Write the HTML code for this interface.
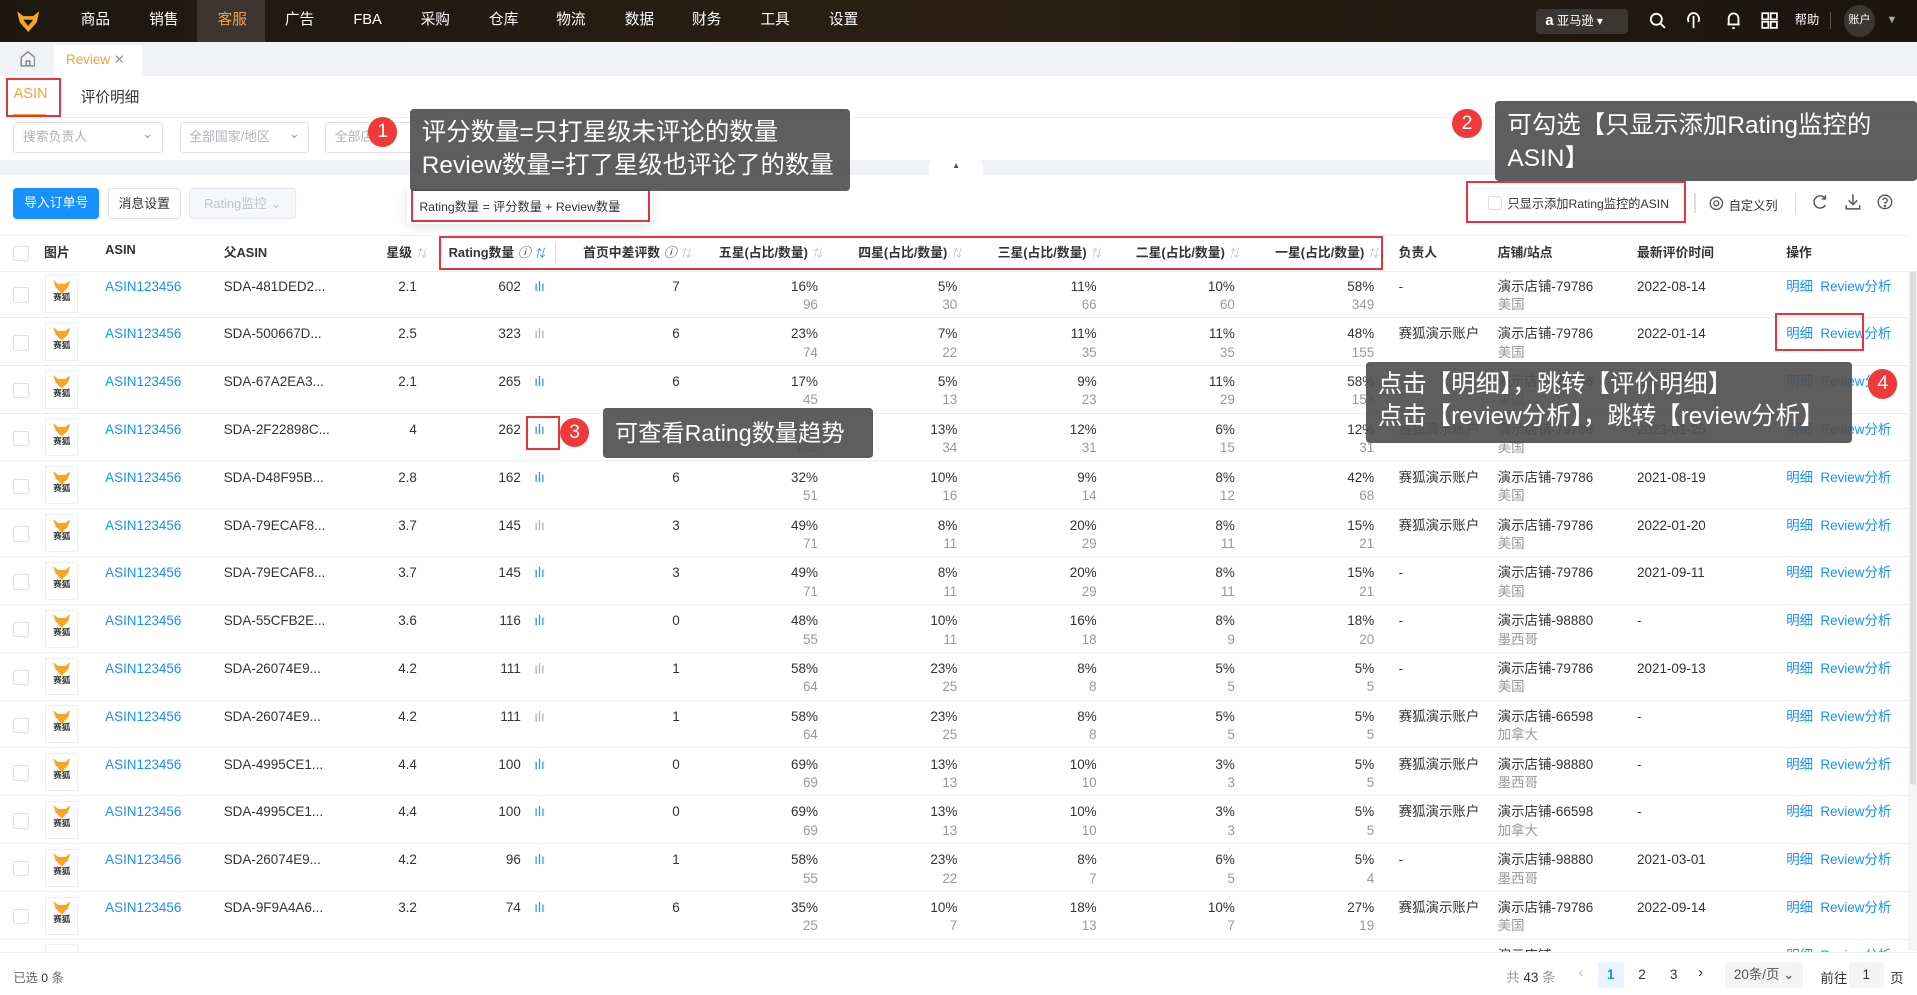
<!DOCTYPE html>
<html><head><meta charset="utf-8">
<style>
html,body{margin:0;padding:0;overflow:hidden;background:#fff}
#w{zoom:1.22258;width:1568px;height:814px;position:relative;overflow:hidden;font-family:"Liberation Sans","Noto Sans CJK SC",sans-serif;font-size:11px;color:#333}
.abs{position:absolute}
.top{left:0;top:0;width:1568px;height:34px;background:linear-gradient(90deg,#1d1712,#2a1f12 50%,#1a150f);}
.top .m{position:absolute;top:0;height:34px;line-height:34px;color:#fff;font-size:12px}
.tabbar{left:0;top:34px;width:1568px;height:28px;background:#f0f2f5}
.sel{position:absolute;top:100px;height:25px;border:1px solid #dcdfe6;border-radius:3px;box-sizing:border-box;color:#b0b3b8;font-size:10.5px;line-height:23px;padding-left:7px;background:#fff}
.sel:after{content:"⌄";position:absolute;right:7px;top:-3px;color:#999}
.btn{position:absolute;top:154px;height:25px;line-height:25px;border-radius:3px;box-sizing:border-box;text-align:center;font-size:10.5px}
.hd{left:0;top:192px;width:1562px;height:29px;border-bottom:1px solid #ebeef5;border-top:1px solid #ebeef5;font-weight:bold;font-size:10.5px}
.hd span{position:absolute;top:5px}
.sort{color:#c0c4cc;font-weight:normal;font-size:9px}
.ck{position:absolute;left:11px;width:11px;height:11px;border:1px solid #dcdfe6;border-radius:2px;background:#fff}
#rows{position:absolute;left:0;top:221px;width:1562px}
.r{position:relative;height:38.3px;border-bottom:1px solid #ebeef5}
.r .ck{top:14px}
.r i{position:absolute;top:6px;font-style:normal;line-height:14px;text-align:right;white-space:nowrap}
.r i b{display:block;color:#999;font-weight:normal;margin-top:1px}
.r .im{position:absolute;left:37px;top:4px;width:27px;height:31px;border:1px solid #eee;box-sizing:border-box;text-align:center}
.r .im svg{display:block;margin:2px auto 0}
.r .im u{text-decoration:none;font-size:7px;font-weight:bold;display:block;line-height:8px;color:#333}
.l{text-align:left!important}
.bl{color:#1890ff}
.bar{position:absolute;top:8px;left:437px}
.tip{position:absolute;background:rgba(80,80,80,.92);color:#fff;border-radius:3px;font-size:20px;line-height:27px;padding:6px 10px;box-sizing:border-box}
.num{position:absolute;width:24px;height:24px;border-radius:12px;background:#f03a3a;color:#fff;font-size:16px;line-height:24px;text-align:center}
.rb{position:absolute;border:2px solid #e8333a;box-sizing:border-box}
</style></head><body><div id="w">

<div class="abs top">
 <svg class="abs" style="left:13px;top:8px" width="20" height="19" viewBox="0 0 20 19"><path d="M1 1 L6 5 L14 5 L19 1 L17 10 L10 18 L3 10 Z" fill="#f5a623"/><path d="M6 8 L10 13 L14 8 Z" fill="#1d1712"/></svg>
 <div class="abs" style="left:161px;top:0;width:56px;height:34px;background:#3b3430"></div>
 <span class="m" style="left:66px">商品</span><span class="m" style="left:122px">销售</span><span class="m" style="left:178px;color:#f7a13a">客服</span><span class="m" style="left:233px">广告</span><span class="m" style="left:289px">FBA</span><span class="m" style="left:344px">采购</span><span class="m" style="left:400px">仓库</span><span class="m" style="left:455px">物流</span><span class="m" style="left:511px">数据</span><span class="m" style="left:566px">财务</span><span class="m" style="left:622px">工具</span><span class="m" style="left:678px">设置</span>
 <div class="abs" style="left:1256px;top:7px;width:76px;height:21px;background:#3a3632;border-radius:3px;color:#fff;font-size:10px;line-height:21px;padding-left:8px;box-sizing:border-box"><b style="font-size:12px">a</b> 亚马逊 ▾</div>
 <svg class="abs" style="left:1349px;top:10px" width="14" height="14" viewBox="0 0 14 14" fill="none" stroke="#fff" stroke-width="1.5"><circle cx="6" cy="6" r="4.5"/><path d="M9.5 9.5 L13 13"/></svg>
 <svg class="abs" style="left:1378px;top:9px" width="14" height="16" viewBox="0 0 14 16" fill="none" stroke="#fff" stroke-width="1.5"><path d="M3 9 A4.5 5 0 1 1 11 9 M7 4 v10"/></svg>
 <svg class="abs" style="left:1411px;top:9px" width="14" height="16" viewBox="0 0 14 16" fill="none" stroke="#fff" stroke-width="1.5"><path d="M3 11 V6 A4 4 0 0 1 11 6 V11 H2 H12 M6 14 h2"/></svg>
 <svg class="abs" style="left:1440px;top:10px" width="14" height="14" viewBox="0 0 14 14" fill="none" stroke="#fff" stroke-width="1.4"><rect x="1" y="1" width="5" height="5"/><rect x="8" y="1" width="5" height="5"/><rect x="1" y="8" width="5" height="5"/><rect x="8" y="8" width="5" height="5"/></svg>
 <span class="m" style="left:1468px;font-size:10px">帮助</span>
 <div class="abs" style="left:1497px;top:10px;width:1px;height:14px;background:#555"></div>
 <div class="abs" style="left:1508px;top:4px;width:26px;height:26px;border-radius:13px;background:#3a3632;color:#fff;font-size:9px;line-height:26px;text-align:center">账户</div>
 <span class="m" style="left:1543px;color:#aaa;font-size:9px">▼</span>
</div>

<div class="abs tabbar">
 <svg class="abs" style="left:16px;top:7px" width="13" height="14" viewBox="0 0 13 14" fill="none" stroke="#888" stroke-width="1.2"><path d="M1 6 L6.5 1.5 L12 6 V13 H1 Z M5 13 V9 H8 V13"/></svg>
 <div class="abs" style="left:44px;top:3px;width:72px;height:25px;background:#fff;color:#f7a13a;line-height:25px;padding-left:10px;box-sizing:border-box">Review <span style="color:#999">✕</span></div>
</div>

<div class="abs" style="left:0;top:62px;width:1568px;height:34px;border-bottom:1px solid #ebeef5"></div>
<span class="abs" style="left:11px;top:70px;font-size:12px;color:#f7a13a">ASIN</span>
<div class="abs" style="left:11px;top:93px;width:27px;height:2px;background:#f7a13a"></div>
<span class="abs" style="left:66px;top:70px;font-size:12px">评价明细</span>
<div class="rb" style="left:5px;top:64px;width:45px;height:32px"></div>

<div class="sel" style="left:11px;width:122px">搜索负责人</div>
<div class="sel" style="left:147px;width:106px">全部国家/地区</div>
<div class="sel" style="left:266px;width:120px">全部店</div>
<div class="abs" style="left:0;top:131px;width:1568px;height:12px;background:#f0f2f5"></div>
<div class="abs" style="left:760px;top:131px;width:44px;height:12px;background:#fff;border-radius:4px 4px 0 0;text-align:center;font-size:7px;color:#555">▲</div>

<div class="btn" style="left:11px;width:70px;background:#1890ff;color:#fff">导入订单号</div>
<div class="btn" style="left:88px;width:60px;border:1px solid #dcdfe6">消息设置</div>
<div class="btn" style="left:155px;width:87px;border:1px solid #e4e7ed;background:#f5f7fa;color:#c0c4cc">Rating监控 ⌄</div>

<div class="abs" style="left:1217px;top:160px;width:10px;height:10px;border:1px solid #dcdfe6;border-radius:2px"></div>
<span class="abs" style="left:1233px;top:159px;font-size:10px">只显示添加Rating监控的ASIN</span>
<div class="rb" style="left:1199px;top:148px;width:180px;height:34px"></div>
<div class="abs" style="left:1386px;top:158px;width:1px;height:16px;background:#ddd"></div>
<svg class="abs" style="left:1398px;top:160px" width="12" height="12" viewBox="0 0 12 12" fill="none" stroke="#555" stroke-width="1.1"><circle cx="6" cy="6" r="5"/><circle cx="6" cy="6" r="2"/></svg>
<span class="abs" style="left:1414px;top:160px;font-size:10px">自定义列</span>
<div class="abs" style="left:1468px;top:158px;width:1px;height:16px;background:#ddd"></div>
<svg class="abs" style="left:1482px;top:159px" width="13" height="13" viewBox="0 0 13 13" fill="none" stroke="#555" stroke-width="1.2"><path d="M11 4 A5 5 0 1 0 11 9 M11 1 V4 H8"/></svg>
<svg class="abs" style="left:1509px;top:158px" width="13" height="14" viewBox="0 0 13 14" fill="none" stroke="#555" stroke-width="1.2"><path d="M6.5 1 V9 M3 6 L6.5 9.5 L10 6 M1 10 V13 H12 V10"/></svg>
<svg class="abs" style="left:1535px;top:159px" width="13" height="13" viewBox="0 0 13 13" fill="none" stroke="#555" stroke-width="1.1"><circle cx="6.5" cy="6.5" r="5.5"/><path d="M4.8 5 A1.8 1.8 0 1 1 6.5 7 V8"/><circle cx="6.5" cy="9.8" r=".5" fill="#555"/></svg>

<div class="abs hd">
 <div class="ck" style="top:8px"></div>
 <span style="left:36px">图片</span><span style="left:86px">ASIN</span><span style="left:183px">父ASIN</span>
 <span style="left:316px">星级 <em class="sort">⇅</em></span>
 <span style="left:367px">Rating数量 <em style="font-weight:normal">ⓘ</em> <em class="sort" style="color:#1890ff">⇅</em></span>
 <div class="abs" style="left:454px;top:6px;width:1px;height:16px;background:#ddd"></div>
 <span style="left:477px">首页中差评数 <em style="font-weight:normal">ⓘ</em> <em class="sort">⇅</em></span>
 <span style="left:588px">五星(占比/数量) <em class="sort">⇅</em></span>
 <span style="left:702px">四星(占比/数量) <em class="sort">⇅</em></span>
 <span style="left:816px">三星(占比/数量) <em class="sort">⇅</em></span>
 <span style="left:929px">二星(占比/数量) <em class="sort">⇅</em></span>
 <span style="left:1043px">一星(占比/数量) <em class="sort">⇅</em></span>
 <span style="left:1144px">负责人</span><span style="left:1225px">店铺/站点</span><span style="left:1339px">最新评价时间</span><span style="left:1461px">操作</span>
</div>

<div id="rows">
<div class="r"><div class="ck"></div><div class="im"><svg width="16" height="12" viewBox="0 0 16 12"><path d="M1 1 L5 4 L11 4 L15 1 L13 7 L8 12 L3 7Z" fill="#f5a623"/></svg><u>赛狐</u></div><i class="l bl" style="left:86px">ASIN123456</i><i class="l" style="left:183px">SDA-481DED2...</i><i style="right:1221px">2.1</i><i style="right:1136px">602</i><i class="bar bl">ılı</i><i style="right:1006px">7</i><i style="right:893px">16%<b>96</b></i><i style="right:779px">5%<b>30</b></i><i style="right:665px">11%<b>66</b></i><i style="right:552px">10%<b>60</b></i><i style="right:438px">58%<b>349</b></i><i class="l" style="left:1144px">-</i><i class="l" style="left:1225px">演示店铺-79786<b class="l">美国</b></i><i class="l" style="left:1339px">2022-08-14</i><i class="l bl" style="left:1461px">明细</i><i class="l bl" style="left:1489px">Review分析</i></div>
<div class="r"><div class="ck"></div><div class="im"><svg width="16" height="12" viewBox="0 0 16 12"><path d="M1 1 L5 4 L11 4 L15 1 L13 7 L8 12 L3 7Z" fill="#f5a623"/></svg><u>赛狐</u></div><i class="l bl" style="left:86px">ASIN123456</i><i class="l" style="left:183px">SDA-500667D...</i><i style="right:1221px">2.5</i><i style="right:1136px">323</i><i class="bar" style="color:#aaa">ılı</i><i style="right:1006px">6</i><i style="right:893px">23%<b>74</b></i><i style="right:779px">7%<b>22</b></i><i style="right:665px">11%<b>35</b></i><i style="right:552px">11%<b>35</b></i><i style="right:438px">48%<b>155</b></i><i class="l" style="left:1144px">赛狐演示账户</i><i class="l" style="left:1225px">演示店铺-79786<b class="l">美国</b></i><i class="l" style="left:1339px">2022-01-14</i><i class="l bl" style="left:1461px">明细</i><i class="l bl" style="left:1489px">Review分析</i></div>
<div class="r"><div class="ck"></div><div class="im"><svg width="16" height="12" viewBox="0 0 16 12"><path d="M1 1 L5 4 L11 4 L15 1 L13 7 L8 12 L3 7Z" fill="#f5a623"/></svg><u>赛狐</u></div><i class="l bl" style="left:86px">ASIN123456</i><i class="l" style="left:183px">SDA-67A2EA3...</i><i style="right:1221px">2.1</i><i style="right:1136px">265</i><i class="bar bl">ılı</i><i style="right:1006px">6</i><i style="right:893px">17%<b>45</b></i><i style="right:779px">5%<b>13</b></i><i style="right:665px">9%<b>23</b></i><i style="right:552px">11%<b>29</b></i><i style="right:438px">58%<b>153</b></i><i class="l" style="left:1225px">演示店铺-79786<b class="l">美国</b></i><i class="l" style="left:1339px">2023-02-10</i><i class="l bl" style="left:1461px">明细</i><i class="l bl" style="left:1489px">Review分析</i></div>
<div class="r"><div class="ck"></div><div class="im"><svg width="16" height="12" viewBox="0 0 16 12"><path d="M1 1 L5 4 L11 4 L15 1 L13 7 L8 12 L3 7Z" fill="#f5a623"/></svg><u>赛狐</u></div><i class="l bl" style="left:86px">ASIN123456</i><i class="l" style="left:183px">SDA-2F22898C...</i><i style="right:1221px">4</i><i style="right:1136px">262</i><i class="bar bl">ılı</i><i style="right:1006px">2</i><i style="right:893px">56%<b>149</b></i><i style="right:779px">13%<b>34</b></i><i style="right:665px">12%<b>31</b></i><i style="right:552px">6%<b>15</b></i><i style="right:438px">12%<b>31</b></i><i class="l" style="left:1144px">赛狐演示账户</i><i class="l" style="left:1225px">演示店铺-79786<b class="l">美国</b></i><i class="l" style="left:1339px">2023-01-25</i><i class="l bl" style="left:1461px">明细</i><i class="l bl" style="left:1489px">Review分析</i></div>
<div class="r"><div class="ck"></div><div class="im"><svg width="16" height="12" viewBox="0 0 16 12"><path d="M1 1 L5 4 L11 4 L15 1 L13 7 L8 12 L3 7Z" fill="#f5a623"/></svg><u>赛狐</u></div><i class="l bl" style="left:86px">ASIN123456</i><i class="l" style="left:183px">SDA-D48F95B...</i><i style="right:1221px">2.8</i><i style="right:1136px">162</i><i class="bar bl">ılı</i><i style="right:1006px">6</i><i style="right:893px">32%<b>51</b></i><i style="right:779px">10%<b>16</b></i><i style="right:665px">9%<b>14</b></i><i style="right:552px">8%<b>12</b></i><i style="right:438px">42%<b>68</b></i><i class="l" style="left:1144px">赛狐演示账户</i><i class="l" style="left:1225px">演示店铺-79786<b class="l">美国</b></i><i class="l" style="left:1339px">2021-08-19</i><i class="l bl" style="left:1461px">明细</i><i class="l bl" style="left:1489px">Review分析</i></div>
<div class="r"><div class="ck"></div><div class="im"><svg width="16" height="12" viewBox="0 0 16 12"><path d="M1 1 L5 4 L11 4 L15 1 L13 7 L8 12 L3 7Z" fill="#f5a623"/></svg><u>赛狐</u></div><i class="l bl" style="left:86px">ASIN123456</i><i class="l" style="left:183px">SDA-79ECAF8...</i><i style="right:1221px">3.7</i><i style="right:1136px">145</i><i class="bar" style="color:#aaa">ılı</i><i style="right:1006px">3</i><i style="right:893px">49%<b>71</b></i><i style="right:779px">8%<b>11</b></i><i style="right:665px">20%<b>29</b></i><i style="right:552px">8%<b>11</b></i><i style="right:438px">15%<b>21</b></i><i class="l" style="left:1144px">赛狐演示账户</i><i class="l" style="left:1225px">演示店铺-79786<b class="l">美国</b></i><i class="l" style="left:1339px">2022-01-20</i><i class="l bl" style="left:1461px">明细</i><i class="l bl" style="left:1489px">Review分析</i></div>
<div class="r"><div class="ck"></div><div class="im"><svg width="16" height="12" viewBox="0 0 16 12"><path d="M1 1 L5 4 L11 4 L15 1 L13 7 L8 12 L3 7Z" fill="#f5a623"/></svg><u>赛狐</u></div><i class="l bl" style="left:86px">ASIN123456</i><i class="l" style="left:183px">SDA-79ECAF8...</i><i style="right:1221px">3.7</i><i style="right:1136px">145</i><i class="bar bl">ılı</i><i style="right:1006px">3</i><i style="right:893px">49%<b>71</b></i><i style="right:779px">8%<b>11</b></i><i style="right:665px">20%<b>29</b></i><i style="right:552px">8%<b>11</b></i><i style="right:438px">15%<b>21</b></i><i class="l" style="left:1144px">-</i><i class="l" style="left:1225px">演示店铺-79786<b class="l">美国</b></i><i class="l" style="left:1339px">2021-09-11</i><i class="l bl" style="left:1461px">明细</i><i class="l bl" style="left:1489px">Review分析</i></div>
<div class="r"><div class="ck"></div><div class="im"><svg width="16" height="12" viewBox="0 0 16 12"><path d="M1 1 L5 4 L11 4 L15 1 L13 7 L8 12 L3 7Z" fill="#f5a623"/></svg><u>赛狐</u></div><i class="l bl" style="left:86px">ASIN123456</i><i class="l" style="left:183px">SDA-55CFB2E...</i><i style="right:1221px">3.6</i><i style="right:1136px">116</i><i class="bar bl">ılı</i><i style="right:1006px">0</i><i style="right:893px">48%<b>55</b></i><i style="right:779px">10%<b>11</b></i><i style="right:665px">16%<b>18</b></i><i style="right:552px">8%<b>9</b></i><i style="right:438px">18%<b>20</b></i><i class="l" style="left:1144px">-</i><i class="l" style="left:1225px">演示店铺-98880<b class="l">墨西哥</b></i><i class="l" style="left:1339px">-</i><i class="l bl" style="left:1461px">明细</i><i class="l bl" style="left:1489px">Review分析</i></div>
<div class="r"><div class="ck"></div><div class="im"><svg width="16" height="12" viewBox="0 0 16 12"><path d="M1 1 L5 4 L11 4 L15 1 L13 7 L8 12 L3 7Z" fill="#f5a623"/></svg><u>赛狐</u></div><i class="l bl" style="left:86px">ASIN123456</i><i class="l" style="left:183px">SDA-26074E9...</i><i style="right:1221px">4.2</i><i style="right:1136px">111</i><i class="bar" style="color:#aaa">ılı</i><i style="right:1006px">1</i><i style="right:893px">58%<b>64</b></i><i style="right:779px">23%<b>25</b></i><i style="right:665px">8%<b>8</b></i><i style="right:552px">5%<b>5</b></i><i style="right:438px">5%<b>5</b></i><i class="l" style="left:1144px">-</i><i class="l" style="left:1225px">演示店铺-79786<b class="l">美国</b></i><i class="l" style="left:1339px">2021-09-13</i><i class="l bl" style="left:1461px">明细</i><i class="l bl" style="left:1489px">Review分析</i></div>
<div class="r"><div class="ck"></div><div class="im"><svg width="16" height="12" viewBox="0 0 16 12"><path d="M1 1 L5 4 L11 4 L15 1 L13 7 L8 12 L3 7Z" fill="#f5a623"/></svg><u>赛狐</u></div><i class="l bl" style="left:86px">ASIN123456</i><i class="l" style="left:183px">SDA-26074E9...</i><i style="right:1221px">4.2</i><i style="right:1136px">111</i><i class="bar" style="color:#aaa">ılı</i><i style="right:1006px">1</i><i style="right:893px">58%<b>64</b></i><i style="right:779px">23%<b>25</b></i><i style="right:665px">8%<b>8</b></i><i style="right:552px">5%<b>5</b></i><i style="right:438px">5%<b>5</b></i><i class="l" style="left:1144px">赛狐演示账户</i><i class="l" style="left:1225px">演示店铺-66598<b class="l">加拿大</b></i><i class="l" style="left:1339px">-</i><i class="l bl" style="left:1461px">明细</i><i class="l bl" style="left:1489px">Review分析</i></div>
<div class="r"><div class="ck"></div><div class="im"><svg width="16" height="12" viewBox="0 0 16 12"><path d="M1 1 L5 4 L11 4 L15 1 L13 7 L8 12 L3 7Z" fill="#f5a623"/></svg><u>赛狐</u></div><i class="l bl" style="left:86px">ASIN123456</i><i class="l" style="left:183px">SDA-4995CE1...</i><i style="right:1221px">4.4</i><i style="right:1136px">100</i><i class="bar bl">ılı</i><i style="right:1006px">0</i><i style="right:893px">69%<b>69</b></i><i style="right:779px">13%<b>13</b></i><i style="right:665px">10%<b>10</b></i><i style="right:552px">3%<b>3</b></i><i style="right:438px">5%<b>5</b></i><i class="l" style="left:1144px">赛狐演示账户</i><i class="l" style="left:1225px">演示店铺-98880<b class="l">墨西哥</b></i><i class="l" style="left:1339px">-</i><i class="l bl" style="left:1461px">明细</i><i class="l bl" style="left:1489px">Review分析</i></div>
<div class="r"><div class="ck"></div><div class="im"><svg width="16" height="12" viewBox="0 0 16 12"><path d="M1 1 L5 4 L11 4 L15 1 L13 7 L8 12 L3 7Z" fill="#f5a623"/></svg><u>赛狐</u></div><i class="l bl" style="left:86px">ASIN123456</i><i class="l" style="left:183px">SDA-4995CE1...</i><i style="right:1221px">4.4</i><i style="right:1136px">100</i><i class="bar bl">ılı</i><i style="right:1006px">0</i><i style="right:893px">69%<b>69</b></i><i style="right:779px">13%<b>13</b></i><i style="right:665px">10%<b>10</b></i><i style="right:552px">3%<b>3</b></i><i style="right:438px">5%<b>5</b></i><i class="l" style="left:1144px">赛狐演示账户</i><i class="l" style="left:1225px">演示店铺-66598<b class="l">加拿大</b></i><i class="l" style="left:1339px">-</i><i class="l bl" style="left:1461px">明细</i><i class="l bl" style="left:1489px">Review分析</i></div>
<div class="r"><div class="ck"></div><div class="im"><svg width="16" height="12" viewBox="0 0 16 12"><path d="M1 1 L5 4 L11 4 L15 1 L13 7 L8 12 L3 7Z" fill="#f5a623"/></svg><u>赛狐</u></div><i class="l bl" style="left:86px">ASIN123456</i><i class="l" style="left:183px">SDA-26074E9...</i><i style="right:1221px">4.2</i><i style="right:1136px">96</i><i class="bar bl">ılı</i><i style="right:1006px">1</i><i style="right:893px">58%<b>55</b></i><i style="right:779px">23%<b>22</b></i><i style="right:665px">8%<b>7</b></i><i style="right:552px">6%<b>5</b></i><i style="right:438px">5%<b>4</b></i><i class="l" style="left:1144px">-</i><i class="l" style="left:1225px">演示店铺-98880<b class="l">墨西哥</b></i><i class="l" style="left:1339px">2021-03-01</i><i class="l bl" style="left:1461px">明细</i><i class="l bl" style="left:1489px">Review分析</i></div>
<div class="r"><div class="ck"></div><div class="im"><svg width="16" height="12" viewBox="0 0 16 12"><path d="M1 1 L5 4 L11 4 L15 1 L13 7 L8 12 L3 7Z" fill="#f5a623"/></svg><u>赛狐</u></div><i class="l bl" style="left:86px">ASIN123456</i><i class="l" style="left:183px">SDA-9F9A4A6...</i><i style="right:1221px">3.2</i><i style="right:1136px">74</i><i class="bar bl">ılı</i><i style="right:1006px">6</i><i style="right:893px">35%<b>25</b></i><i style="right:779px">10%<b>7</b></i><i style="right:665px">18%<b>13</b></i><i style="right:552px">10%<b>7</b></i><i style="right:438px">27%<b>19</b></i><i class="l" style="left:1144px">赛狐演示账户</i><i class="l" style="left:1225px">演示店铺-79786<b class="l">美国</b></i><i class="l" style="left:1339px">2022-09-14</i><i class="l bl" style="left:1461px">明细</i><i class="l bl" style="left:1489px">Review分析</i></div>
<div class="r"><div class="ck"></div><div class="im"></div><i class="l" style="left:1225px">演示店铺</i><i class="l bl" style="left:1461px">明细</i><i class="l bl" style="left:1489px">Review分析</i></div>
</div>

<div class="abs" style="left:1561px;top:222px;width:7px;height:556px;background:#f5f5f5"><div style="margin:0 1px;width:5px;height:420px;background:#ddd;border-radius:3px"></div></div>

<div class="abs" style="left:0;top:779px;width:1568px;height:35px;background:#fff;border-top:1px solid #ebeef5"></div>
<span class="abs" style="left:11px;top:792px;font-size:10px;color:#666">已选 <b style="color:#333;font-weight:normal">0</b> 条</span>
<span class="abs" style="left:1232px;top:790px;font-size:11px;color:#999">共 <span style="color:#333">43</span> 条</span>
<span class="abs" style="left:1291px;top:789px;color:#bbb;font-size:12px">‹</span>
<div class="abs" style="left:1307px;top:787px;width:21px;height:21px;background:#e8f4ff;color:#1890ff;text-align:center;line-height:21px;font-weight:bold">1</div>
<span class="abs" style="left:1340px;top:791px">2</span><span class="abs" style="left:1366px;top:791px">3</span>
<span class="abs" style="left:1389px;top:789px;font-size:12px">›</span>
<div class="abs" style="left:1411px;top:787px;width:64px;height:21px;background:#f4f4f5;border-radius:3px;line-height:21px;text-align:center;color:#555">20条/页 ⌄</div>
<span class="abs" style="left:1489px;top:791px">前往</span>
<div class="abs" style="left:1512px;top:787px;width:29px;height:21px;background:#f4f4f5;border-radius:3px;line-height:21px;text-align:center">1</div>
<span class="abs" style="left:1546px;top:791px">页</span>

<div class="rb" style="left:359px;top:193px;width:772px;height:28px"></div>
<div class="abs" style="left:333px;top:153px;width:200px;height:30px;background:#fff;box-shadow:0 2px 8px rgba(0,0,0,.12)"></div>
<div class="rb" style="left:336px;top:155px;width:196px;height:27px"></div>
<span class="abs" style="left:343px;top:161px;font-size:10px">Rating数量 = 评分数量 + Review数量</span>
<div class="tip" style="left:335px;top:89px;width:360px;height:67px">评分数量=只打星级未评论的数量<br>Review数量=打了星级也评论了的数量</div>
<div class="num" style="left:301px;top:96px">1</div>
<div class="tip" style="left:1223px;top:83px;width:345px;height:65px">可勾选【只显示添加Rating监控的<br>ASIN】</div>
<div class="num" style="left:1188px;top:89px">2</div>
<div class="rb" style="left:430px;top:340px;width:28px;height:28px"></div>
<div class="num" style="left:458px;top:342px">3</div>
<div class="tip" style="left:493px;top:334px;width:221px;height:41px;line-height:28px;font-size:19px">可查看Rating数量趋势</div>
<div class="rb" style="left:1452px;top:256px;width:73px;height:31px"></div>
<div class="tip" style="left:1117px;top:296px;width:398px;height:66px;line-height:26px">点击【明细】，跳转【评价明细】<br>点击【review分析】，跳转【review分析】</div>
<div class="num" style="left:1528px;top:302px">4</div>
</div></body></html>
